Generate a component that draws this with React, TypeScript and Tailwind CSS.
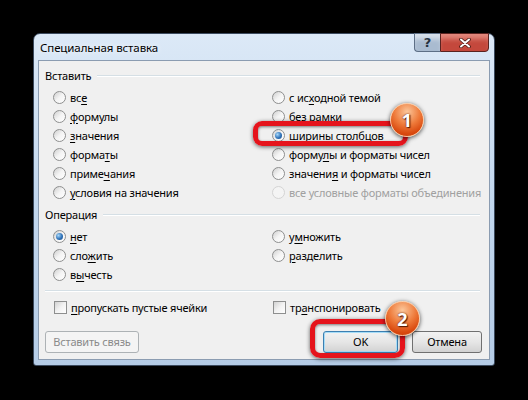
import React from 'react';
import clsx from 'clsx';

type Opt = {
  pre: string;
  hot?: string;
  post?: string;
  checked?: boolean;
  disabled?: boolean;
};

const Label = ({ pre, hot, post, disabled }: Opt) => (
  <span className={clsx('whitespace-nowrap', disabled ? 'text-[#a0a0a0]' : 'text-black')}>
    {pre}
    {hot && <span className="underline underline-offset-[2px]">{hot}</span>}
    {post}
  </span>
);

const Radio = ({ checked, disabled }: { checked?: boolean; disabled?: boolean }) => (
  <span
    className={clsx(
      'w-[13px] h-[13px] rounded-full border flex items-center justify-center shrink-0',
      disabled
        ? 'border-[#d4d4d4] bg-[#f4f4f4]'
        : 'border-[#8e8f8f] bg-linear-to-br from-[#cfcfcf] via-[#f4f4f4] to-white',
    )}
  >
    {checked && (
      <span className="w-[7px] h-[7px] rounded-full bg-[radial-gradient(circle_at_35%_35%,#a8d8fa,#2f72b8_55%,#1c4b85)]" />
    )}
  </span>
);

const Check = () => (
  <span className="w-[13px] h-[13px] border border-[#8e8f8f] bg-linear-to-br from-[#d2d2d2] via-[#f2f2f2] to-white shrink-0" />
);

const RadioRow = (o: Opt) => (
  <div className="h-[19px] flex items-center gap-[4px]">
    <Radio checked={o.checked} disabled={o.disabled} />
    <Label {...o} />
  </div>
);

const GroupTitle = ({ children }: { children: React.ReactNode }) => (
  <div className="h-[16px] flex items-center gap-[6px] pl-[6px]">
    <span className="text-black">{children}</span>
    <span className="flex-1 h-[2px] border-t border-[#d5dfe5] border-b border-b-white" />
  </div>
);

const pasteLeft: Opt[] = [
  { pre: 'вс', hot: 'е' },
  { pre: '', hot: 'ф', post: 'ормулы' },
  { pre: '', hot: 'з', post: 'начения' },
  { pre: 'форма', hot: 'т', post: 'ы' },
  { pre: 'приме', hot: 'ч', post: 'ания' },
  { pre: '', hot: 'у', post: 'словия на значения' },
];

const pasteRight: Opt[] = [
  { pre: 'с ис', hot: 'х', post: 'одной темой' },
  { pre: 'без ', hot: 'р', post: 'амки' },
  { pre: '', hot: 'ш', post: 'ирины столбцов', checked: true },
  { pre: 'форму', hot: 'л', post: 'ы и форматы чисел' },
  { pre: 'значени', hot: 'я', post: ' и форматы чисел' },
  { pre: 'все условные форматы объединения', disabled: true },
];

const Badge = ({ n, className }: { n: string; className: string }) => (
  <div
    className={clsx(
      'absolute rounded-full flex items-center justify-center border border-[#f7c9a4] shadow-[0_1px_4px_rgba(0,0,0,0.7)]',
      'bg-[radial-gradient(circle_at_50%_25%,#fbc79b,#ee7a3a_45%,#d9490f_75%,#c23a0a)]',
      className,
    )}
  >
    <span className="text-white font-bold text-[18px] leading-none tracking-normal [text-shadow:0_0_2px_#5a1a00,1px_1px_1px_#5a1a00]">
      {n}
    </span>
  </div>
);

const btn = 'h-[22px] rounded-[3px] border flex items-center justify-center';

const App = () => {
  return (
    <div className="w-[528px] h-[400px] bg-black relative overflow-hidden pt-[33px] pl-[33px] font-['Noto_Sans',sans-serif] text-[11px] leading-[16px] tracking-[-0.2px]">
      <div className="w-[462px] h-[333px] flex flex-col border border-[#3b4a5e] rounded-t-[7px] rounded-b-[3px] bg-linear-to-b from-[#dce9f7] via-[#c2d7ee] to-[#b5cce6] px-[4px] pb-[4px]">
        <div className="h-[26px] flex items-start">
          <span className="flex-1 pt-[6px] pl-[2px] text-[11.5px] tracking-[-0.1px] text-black [text-shadow:0_0_6px_#ffffff]">
            Специальная вставка
          </span>
          <span className="w-[26px] h-[19px] -mt-px border border-[#5d6f86] border-r-0 rounded-bl-[4px] bg-[#a9bbd0] shadow-[inset_0_7px_5px_-2px_rgba(255,255,255,0.55)] flex items-center justify-center text-[#26323f] font-bold text-[13px] leading-none font-['DejaVu_Sans',sans-serif]">
            ?
          </span>
          <span className="w-[49px] h-[19px] -mt-px mr-[1px] border border-[#5a2320] rounded-br-[4px] bg-[#c4483c] shadow-[inset_0_7px_5px_-2px_rgba(255,200,190,0.5)] flex items-center justify-center">
            <svg width="12" height="10" viewBox="0 0 12 10">
              <path d="M2 1.5 L10 8.5 M10 1.5 L2 8.5" stroke="#4a1b15" strokeWidth="3.6" strokeLinecap="round" />
              <path d="M2 1.5 L10 8.5 M10 1.5 L2 8.5" stroke="#ffffff" strokeWidth="2" strokeLinecap="round" />
            </svg>
          </span>
        </div>

        <div className="h-[300px] border border-[#8b9cb1] bg-[#f0f0f0] flex flex-col pt-[7px] pr-[9px]">
          <GroupTitle>Вставить</GroupTitle>
          <div className="grid grid-cols-[219px_1fr] pl-[14px] mt-[4px]">
            <div className="flex flex-col">
              {pasteLeft.map((o) => (
                <RadioRow key={o.pre + (o.post ?? '')} {...o} />
              ))}
            </div>
            <div className="flex flex-col">
              {pasteRight.map((o) => (
                <RadioRow key={o.pre + (o.post ?? '')} {...o} />
              ))}
            </div>
          </div>

          <div className="mt-[5px]">
            <GroupTitle>Операция</GroupTitle>
          </div>
          <div className="grid grid-cols-[219px_1fr] pl-[14px] mt-[4px]">
            <div className="flex flex-col">
              <RadioRow pre="" hot="н" post="ет" checked />
              <RadioRow pre="сло" hot="ж" post="ить" />
              <RadioRow pre="в" hot="ы" post="честь" />
            </div>
            <div className="flex flex-col">
              <RadioRow pre="у" hot="м" post="ножить" />
              <RadioRow pre="" hot="р" post="азделить" />
            </div>
          </div>

          <div className="mt-[6px] ml-[6px] h-[2px] border-t border-[#d5dfe5] border-b border-b-white" />

          <div className="grid grid-cols-[219px_1fr] pl-[15px] mt-[6px]">
            <div className="h-[19px] flex items-center gap-[4px]">
              <Check />
              <Label pre="" hot="п" post="ропускать пустые ячейки" />
            </div>
            <div className="h-[19px] flex items-center gap-[4px]">
              <Check />
              <Label pre="тр" hot="а" post="нспонировать" />
            </div>
          </div>

          <div className="mt-[14px] flex justify-between pl-[6px]">
            <div className={clsx(btn, 'w-[94px] border-[#adb2b5] bg-[#f4f4f4] text-[#8a8a8a]')}>
              Вставить связь
            </div>
            <div className="flex gap-[14px] -mr-[2px]">
              <div
                className={clsx(
                  btn,
                  'w-[75px] border-[#3c7fb1] shadow-[inset_0_0_0_1px_#a6dcf7] bg-linear-to-b from-[#f2f2f2] via-[#e6e6e6] to-[#d2d2d2] text-black',
                )}
              >
                OK
              </div>
              <div
                className={clsx(
                  btn,
                  'w-[70px] border-[#707070] bg-linear-to-b from-[#f2f2f2] via-[#e6e6e6] to-[#d2d2d2] text-black',
                )}
              >
                Отмена
              </div>
            </div>
          </div>
        </div>
      </div>

      <div className="absolute left-[253px] top-[121px] w-[155px] h-[25px] rounded-[9px] border-[5px] border-[#e5141c] shadow-[0_1px_4px_rgba(0,0,0,0.6),inset_0_1px_3px_rgba(0,0,0,0.5)]" />
      <Badge n="1" className="left-[390px] top-[103px] w-[34px] h-[34px]" />

      <div className="absolute left-[310px] top-[319px] w-[95px] h-[39px] rounded-[10px] border-[5px] border-[#e5141c] shadow-[0_1px_4px_rgba(0,0,0,0.6),inset_0_1px_3px_rgba(0,0,0,0.5)]" />
      <Badge n="2" className="left-[385px] top-[301px] w-[35px] h-[35px]" />
    </div>
  );
};

export default App;
